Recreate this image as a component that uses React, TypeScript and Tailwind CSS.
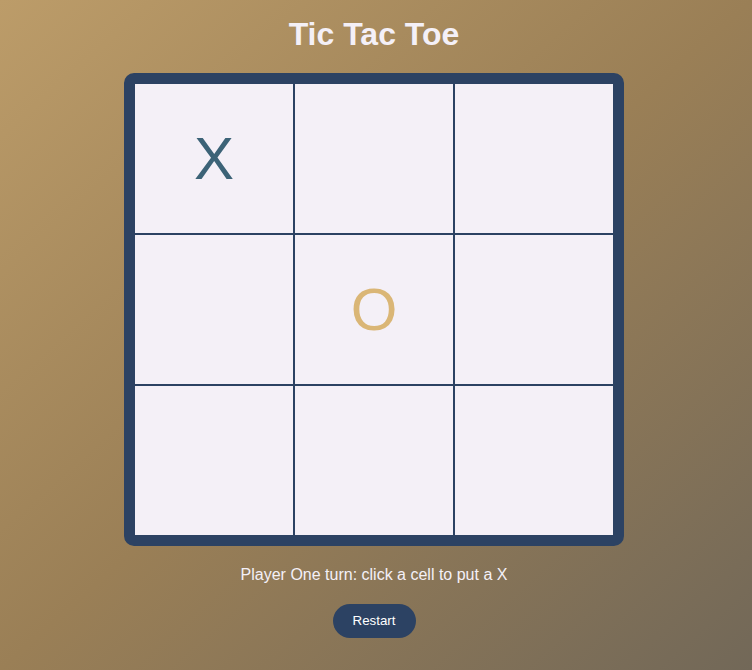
import React, { useState } from "react";

type Mark = "X" | "O" | "";

const initialBoard: Mark[] = ["X", "", "", "", "O", "", "", "", ""];

export default function App() {
  const [board, setBoard] = useState<Mark[]>(initialBoard);
  const [turn, setTurn] = useState<"X" | "O">("X");

  const handleClick = (index: number) => {
    if (board[index]) return;
    const next = [...board];
    next[index] = turn;
    setBoard(next);
    setTurn(turn === "X" ? "O" : "X");
  };

  const restart = () => {
    setBoard(Array(9).fill(""));
    setTurn("X");
  };

  return (
    <div className="min-h-screen w-full pr-[4px] flex flex-col items-center bg-gradient-to-br from-[#bc9c69] via-[#9a7f56] to-[#726858] font-['Liberation_Sans',Arial,sans-serif]">
      <h1 className="mt-[16px] text-[32px] font-bold leading-[37px] text-[#f4f0f7]">
        Tic Tac Toe
      </h1>
      <div className="mt-[20px] w-[500px] rounded-[10px] border-[11px] border-[#2c4263] bg-[#2c4263]">
        <div className="grid grid-cols-3 gap-[2px]">
          {board.map((cell, i) => (
            <div
              key={i}
              onClick={() => handleClick(i)}
              className="h-[149px] bg-[#f4f0f7] flex items-center justify-center cursor-pointer"
            >
              <span
                className={
                  cell === "X"
                    ? "text-[60px] leading-none text-[#3c6377]"
                    : "text-[60px] leading-none text-[#dab676]"
                }
              >
                {cell}
              </span>
            </div>
          ))}
        </div>
      </div>
      <p className="mt-[19px] text-[16px] leading-[20px] text-[#f4f0f7]">
        Player {turn === "X" ? "One" : "Two"} turn: click a cell to put a {turn}
      </p>
      <button
        onClick={restart}
        className="mt-[19px] h-[34px] w-[83px] rounded-full bg-[#2c4263] text-[13.33px] text-white"
      >
        Restart
      </button>
    </div>
  );
}
